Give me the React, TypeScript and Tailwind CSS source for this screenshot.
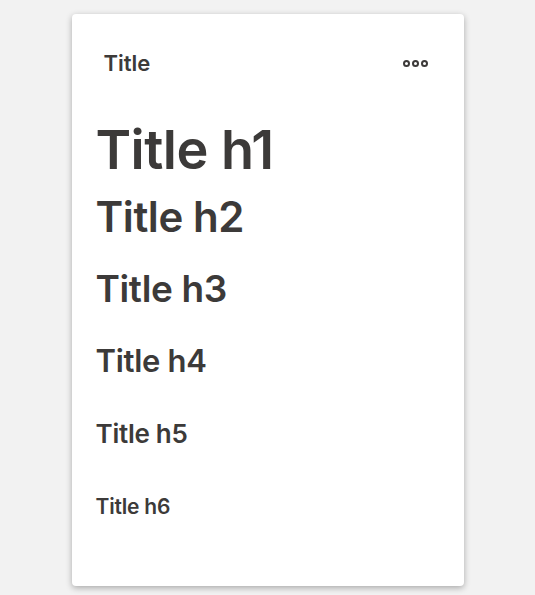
export default function App() {
  const headings = [
    { text: 'Title h1', cls: 'text-[54px] leading-none h-[56px] mt-[49px]' },
    { text: 'Title h2', cls: 'text-[42px] leading-none mt-[17px]' },
    { text: 'Title h3', cls: 'text-[37px] leading-none mt-[32px]' },
    { text: 'Title h4', cls: 'text-[31px] leading-none mt-[38px]' },
    { text: 'Title h5', cls: 'text-[26px] leading-none mt-[45px]' },
    { text: 'Title h6', cls: 'text-[21px] leading-none mt-[49px]' },
  ];
  return (
    <div className="min-h-[595px] bg-[#f2f2f2] flex justify-center pt-[14px]" style={{ fontFamily: 'Inter, "Liberation Sans", sans-serif' }}>
      <div className="w-[392px] h-[572px] bg-white rounded-[4px] shadow-[0_2px_6px_rgba(0,0,0,0.3)] px-6 text-[#3c3a39]">
        <div className="flex items-center justify-between pt-[38px] pl-[8px] pr-[12px]">
          <span className="text-[22px] font-semibold leading-none">Title</span>
          <span className="flex gap-[2px]">
            {[0, 1, 2].map(i => (
              <span key={i} className="w-[7px] h-[7px] rounded-full border-2 border-[#3c3a39]" />
            ))}
          </span>
        </div>
        {headings.map(h => (
          <div key={h.text} className={`font-semibold tracking-[-0.01em] ${h.cls}`}>{h.text}</div>
        ))}
      </div>
    </div>
  );
}
